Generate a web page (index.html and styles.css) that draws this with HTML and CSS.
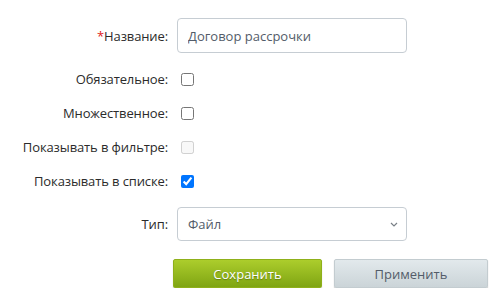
FILE: index.html
```html
<!DOCTYPE html>
<html lang="ru">
<head>
    <meta charset="UTF-8">
    <title>Свойство</title>
    <link rel="stylesheet" href="styles.css">
</head>
<body>
<div class="form">
    <div class="row row-input">
        <label class="label"><span class="req">*</span>Название:</label>
        <div class="control">
            <input class="text-input" type="text" value="Договор рассрочки">
        </div>
    </div>
    <div class="row row-check">
        <label class="label">Обязательное:</label>
        <div class="control"><input type="checkbox"></div>
    </div>
    <div class="row row-check">
        <label class="label">Множественное:</label>
        <div class="control"><input type="checkbox"></div>
    </div>
    <div class="row row-check">
        <label class="label">Показывать в фильтре:</label>
        <div class="control"><input type="checkbox" disabled></div>
    </div>
    <div class="row row-check">
        <label class="label">Показывать в списке:</label>
        <div class="control"><input type="checkbox" checked></div>
    </div>
    <div class="row row-select">
        <label class="label">Тип:</label>
        <div class="control select-wrap">
            <select class="select">
                <option>Файл</option>
            </select>
            <svg class="select-arrow" width="8" height="5" viewBox="0 0 8 5">
                <path d="M1 1l3 3 3-3" fill="none" stroke="#7a8087" stroke-width="1.2"/>
            </svg>
        </div>
    </div>
    <div class="buttons">
        <button class="btn btn-save">Сохранить</button>
        <button class="btn btn-apply">Применить</button>
    </div>
</div>
</body>
</html>
```

FILE: styles.css
```css
*{
    padding: 0;
    margin: 0;
    box-sizing: border-box;
}
body{
    background-color: #ffffff;
    font-family: "Open Sans", "Noto Sans", sans-serif;
    font-size: 13px;
    color: #333333;
}
.form{
    padding-top: 18px;
}
.row{
    display: flex;
    align-items: center;
}
.label{
    width: 177px;
    padding-right: 9px;
    text-align: right;
    color: #2b2b2b;
    letter-spacing: -0.12px;
}
.req{
    color: #e02020;
}
.control{
    width: 230px;
}
.row-input{
    height: 35px;
    margin-bottom: 9px;
}
.row-check{
    height: 34px;
}
.row-check input{
    width: 13px;
    height: 13px;
    margin-left: 4px;
    display: block;
}
.row-select{
    height: 34px;
    margin-top: 9px;
}
.text-input,
.select{
    width: 230px;
    height: 35px;
    border: 1px solid #c6cdd3;
    border-radius: 4px;
    padding: 0 10px;
    font-family: "Open Sans", "Noto Sans", sans-serif;
    font-size: 13px;
    color: #535c69;
    background-color: #ffffff;
    outline: none;
}
.select{
    height: 34px;
    appearance: none;
    -webkit-appearance: none;
}
.select-wrap{
    position: relative;
}
.select-arrow{
    position: absolute;
    right: 9px;
    top: 15px;
}
.buttons{
    display: flex;
    gap: 12px;
    margin-top: 18px;
    margin-left: 173px;
}
.btn{
    height: 29px;
    border-radius: 2px;
    font-family: "Open Sans", "Noto Sans", sans-serif;
    font-size: 13px;
    box-shadow: 0 1px 1px rgba(0, 0, 0, 0.3);
}
.btn-save{
    width: 149px;
    color: #ffffff;
    text-shadow: 0 1px 1px rgba(60, 80, 0, 0.5);
    border: 1px solid #8fb01a;
    background: linear-gradient(#accd2c, #7fa513);
}
.btn-apply{
    width: 154px;
    color: #535c69;
    border: 1px solid #c3ccd0;
    background: linear-gradient(#e2e9ec, #cbd4d8);
}
```
